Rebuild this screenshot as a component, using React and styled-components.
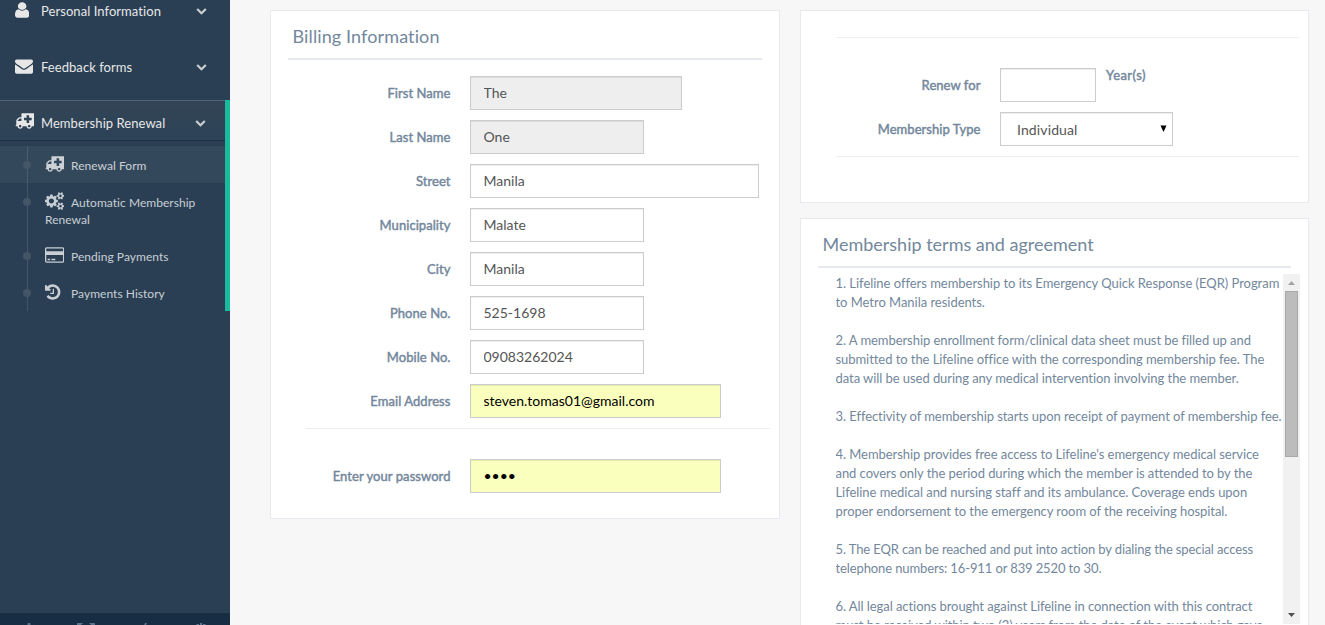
import React from "react";
import styled, { createGlobalStyle, css } from "styled-components";

const GlobalStyle = createGlobalStyle`
  *, *::before, *::after { box-sizing: border-box; }
  body {
    margin: 0;
    background: #f7f7f7;
    color: #73879c;
    font: 400 13px/1.471 Lato, "Liberation Sans", sans-serif;
  }
`;

const Page = styled.div`
  display: flex;
  height: 625px;
  overflow: hidden;
`;

/* ---------- sidebar ---------- */

const Sidebar = styled.aside`
  width: 230px;
  flex: none;
  display: flex;
  flex-direction: column;
  background: #2a3f54;
`;

const Menu = styled.ul`
  list-style: none;
  margin: -12px 0 0;
  padding: 0;
  flex: 1;
`;

const MenuItem = styled.li`
  ${(p) => p.$active && css`border-right: 5px solid #1abb9c;`}
`;

const MenuLink = styled.a`
  display: flex;
  align-items: center;
  height: ${(p) => (p.$active ? 40 : 56)}px;
  padding: 0 ${(p) => (p.$active ? 19 : 23)}px 0 15px;
  ${(p) => !p.$active && css`padding-bottom: 11px;`}
  color: #e7e7e7;
  ${(p) =>
    p.$active &&
    css`
      padding-top: 4px;
      background: linear-gradient(#334556, #2c4257), #2a3f54;
      box-shadow: rgba(0, 0, 0, 0.25) 0 1px 0, inset rgba(255, 255, 255, 0.16) 0 1px 0;
    `}
`;

const IconSlot = styled.span`
  width: 26px;
  display: inline-flex;
  flex: none;
`;

const MenuIcon = styled(IconSlot)`
  padding-bottom: 2px;
`;

const MenuArrow = styled.span`
  opacity: 0.85;
`;

const MenuText = styled.span`
  flex: 1;
  padding-top: 3px;
  letter-spacing: 0.06px;
  white-space: nowrap;
`;

const Glyph = styled.svg`
  display: block;
  flex: none;
  fill: currentColor;
  height: ${(p) => p.$size}px;
`;

const SubMenu = styled.ul`
  position: relative;
  list-style: none;
  margin: 6px 0 0;
  padding: 0;
  &::before {
    content: "";
    position: absolute;
    left: 27px;
    top: 0;
    bottom: 0;
    width: 1px;
    background: #425668;
  }
`;

const SubItem = styled.li`
  position: relative;
  padding: 11px 20px 9px 45px;
  font-size: 12px;
  line-height: 17px;
  letter-spacing: 0.04px;
  color: rgba(255, 255, 255, 0.75);
  background: ${(p) => (p.$current ? "rgba(255, 255, 255, 0.05)" : "none")};
  &::before {
    content: "";
    position: absolute;
    left: 23px;
    top: 15px;
    width: 8px;
    height: 8px;
    border-radius: 50%;
    background: #425668;
  }
`;

const SubIcon = styled(IconSlot)`
  height: 17px;
  vertical-align: top;
  margin-top: -2.5px;
`;

const SidebarFooter = styled.div`
  height: 12px;
  flex: none;
  display: grid;
  grid-template-columns: repeat(4, 1fr);
  justify-items: center;
  overflow: hidden;
  padding-top: 10px;
  background: #172d44;
  color: #5a738e;
`;

/* ---------- content ---------- */

const Content = styled.main`
  flex: 1;
  display: flex;
  align-items: flex-start;
  gap: 20px;
  padding: 10px 16px 0 40px;
`;

const Column = styled.div`
  width: ${(p) => p.$width}px;
  flex: none;
  display: flex;
  flex-direction: column;
  gap: 15px;
`;

const Panel = styled.section`
  height: ${(p) => p.$height}px;
  padding: 10px 17px;
  background: #fff;
  border: 1px solid #e6e9ed;
`;

const PanelTitle = styled.h2`
  height: 39px;
  margin: 0;
  padding: 5px 4.5px 0;
  border-bottom: 2px solid #e6e9ed;
  font-size: 18px;
  font-weight: 400;
  line-height: 20px;
  letter-spacing: ${(p) => p.$tracking || 0}px;
`;

const Form = styled.form`
  padding-top: ${(p) => p.$top}px;
`;

const Row = styled.div`
  display: flex;
  align-items: flex-start;
  margin-bottom: 10px;
`;

const Label = styled.label`
  width: 162.5px;
  flex: none;
  padding-top: 8px;
  text-align: right;
  line-height: 19px;
  letter-spacing: 0.06px;
  -webkit-text-stroke: 0.45px currentColor;
`;

const Unit = styled.span`
  margin-left: 10px;
  line-height: 14px;
  letter-spacing: 0.45px;
  -webkit-text-stroke: 0.45px currentColor;
`;

const fieldBox = css`
  width: ${(p) => p.$width}px;
  height: 34px;
  margin: 0 0 0 19.5px;
  padding: 5px 12px 7px 12.5px;
  border: 1px solid #ccc;
  border-radius: 0;
  outline: none;
  background: #fff;
  box-shadow: inset 0 1px 1px rgba(0, 0, 0, 0.075);
  font: 400 14px/20px Lato, "Liberation Sans", sans-serif;
  color: #555;
`;

const Field = styled.input`
  ${fieldBox}
  ${(p) => p.$locked && css`background: #eee;`}
  ${(p) => p.$filled && css`background: #faffbd; color: #000;`}
`;

const SelectWrap = styled.div`
  position: relative;
`;

const Select = styled.select`
  ${fieldBox}
  appearance: none;
  padding: 7px 12px 5px 16px;
  letter-spacing: 0.12px;
`;

const SelectArrow = styled.svg`
  position: absolute;
  right: 6px;
  top: 13px;
`;

const Divider = styled.hr`
  margin: ${(p) => p.$margin};
  border: 0;
  border-top: 1px solid #eee;
`;

const Terms = styled.div`
  display: flex;
  height: 350px;
  margin: 6px -9px 0 17.5px;
`;

const TermsText = styled.div`
  flex: 1;
  min-width: 0;
  overflow: hidden;
`;

const Clause = styled.p`
  margin: 0 0 19px;
  line-height: 19px;
  letter-spacing: ${(p) => p.$tracking}px;
  white-space: pre;
`;

const ScrollTrack = styled.div`
  width: 17px;
  flex: none;
  display: flex;
  flex-direction: column;
  align-items: center;
  background: #f1f1f1;
`;

const ScrollButton = styled.svg`
  display: block;
  flex: none;
`;

const ScrollThumb = styled.div`
  width: 13px;
  height: 166px;
  margin-bottom: auto;
  background: #bcbcbc;
  border: 1px solid #a8a8a8;
`;

/* ---------- icons ---------- */

const ICONS = {
  user: {
    w: 1280,
    x: 256,
    drawn: 1424,
    d: "M1536 1399q0 109-62.5 187t-150.5 78h-854q-88 0-150.5-78t-62.5-187q0-85 8.5-160.5t31.5-152 58.5-131 94-89 134.5-34.5q131 128 313 128t313-128q76 0 134.5 34.5t94 89 58.5 131 31.5 152 8.5 160.5zm-256-887q0 159-112.5 271.5t-271.5 112.5-271.5-112.5-112.5-271.5 112.5-271.5 271.5-112.5 271.5 112.5 112.5 271.5z",
  },
  envelope: {
    w: 1792,
    d: "M1792 710v794q0 66-47 113t-113 47h-1472q-66 0-113-47t-47-113v-794q44 49 101 87 362 246 497 345 57 42 92.5 65.5t94.5 48 110 24.5h2q51 0 110-24.5t94.5-48 92.5-65.5q170-123 498-345 57-39 100-87zm0-294q0 79-49 151t-122 123q-376 261-468 325-10 7-42.5 31t-54 38.5-52 32.5-57.5 27-50 9h-2q-23 0-50-9t-57.5-27-52-32.5-54-38.5-42.5-31q-91-64-262-182.5t-205-142.5q-62-42-117-115.5t-55-136.5q0-78 41.5-130t118.5-52h1472q65 0 112.5 47t47.5 113z",
  },
  ambulance: {
    w: 1920,
    d: "M640 1408q0-52-38-90t-90-38-90 38-38 90 38 90 90 38 90-38 38-90zM256 896h384v-256h-158q-14 2-22 9l-195 195q-7 12-9 22v30zM1536 1408q0-52-38-90t-90-38-90 38-38 90 38 90 90 38 90-38 38-90zM1664 800v-192q0-14-9-23t-23-9h-224v-224q0-14-9-23t-23-9h-192q-14 0-23 9t-9 23v224h-224q-14 0-23 9t-9 23v192q0 14 9 23t23 9h224v224q0 14 9 23t23 9h192q14 0 23-9t9-23v-224h224q14 0 23-9t9-23zM1920 192v1152q0 26-19 45t-45 19h-192q0 106-75 181t-181 75-181-75-75-181h-384q0 106-75 181t-181 75-181-75-75-181h-128q-26 0-45-19t-19-45 19-45 45-19v-416q0-26 13-58t32-51l198-198q19-19 51-32t58-13h160v-320q0-26 19-45t45-19h1152q26 0 45 19t19 45z",
  },
  cogs: {
    w: 1920,
    d: "M896 896q0-106-75-181t-181-75-181 75-75 181 75 181 181 75 181-75 75-181zm768 512q0-52-38-90t-90-38-90 38-38 90q0 53 37.5 90.5t90.5 37.5 90.5-37.5 37.5-90.5zm0-1024q0-52-38-90t-90-38-90 38-38 90q0 53 37.5 90.5t90.5 37.5 90.5-37.5 37.5-90.5zm-384 421v185q0 10-7 19.5t-16 10.5l-155 24q-11 35-32 76 34 48 90 115 7 11 7 20 0 12-7 19-23 30-82.5 89.5t-78.5 59.5q-11 0-21-7l-115-90q-37 19-77 31-11 108-23 155-7 24-30 24h-186q-11 0-20-7.5t-10-17.5l-23-153q-34-10-75-31l-118 89q-7 7-20 7-11 0-21-8-144-133-144-160 0-9 7-19 10-14 41-53t47-61q-23-44-35-82l-152-24q-10-1-17-9.5t-7-19.5v-185q0-10 7-19.5t16-10.5l155-24q11-35 32-76-34-48-90-115-7-11-7-20 0-12 7-20 22-30 82-89t79-59q11 0 21 7l115 90q34-18 77-32 11-108 23-154 7-24 30-24h186q11 0 20 7.5t10 17.5l23 153q34 10 75 31l118-89q8-7 20-7 11 0 21 8 144 133 144 160 0 8-7 19-12 16-42 54t-45 60q23 48 34 82l152 23q10 2 17 10.5t7 19.5zm640 533v140q0 16-149 31-12 27-30 52 51 113 51 138 0 4-4 7-122 71-124 71-8 0-46-47t-52-68q-20 2-30 2t-30-2q-14 21-52 68t-46 47q-2 0-124-71-4-3-4-7 0-25 51-138-18-25-30-52-149-15-149-31v-140q0-16 149-31 13-29 30-52-51-113-51-138 0-4 4-7 4-2 35-20t59-34 30-16q8 0 46 46.5t52 67.5q20-2 30-2t30 2q51-71 92-112l6-2q4 0 124 70 4 3 4 7 0 25-51 138 17 23 30 52 149 15 149 31zm0-1024v140q0 16-149 31-12 27-30 52 51 113 51 138 0 4-4 7-122 71-124 71-8 0-46-47t-52-68q-20 2-30 2t-30-2q-14 21-52 68t-46 47q-2 0-124-71-4-3-4-7 0-25 51-138-18-25-30-52-149-15-149-31v-140q0-16 149-31 13-29 30-52-51-113-51-138 0-4 4-7 4-2 35-20t59-34 30-16q8 0 46 46.5t52 67.5q20-2 30-2t30 2q51-71 92-112l6-2q4 0 124 70 4 3 4 7 0 25-51 138 17 23 30 52 149 15 149 31z",
  },
  card: {
    w: 1920,
    d: "M1760 128q66 0 113 47t47 113v1216q0 66-47 113t-113 47h-1600q-66 0-113-47t-47-113v-1216q0-66 47-113t113-47h1600zM160 256q-13 0-22.5 9.500t-9.500 22.500v224h1664v-224q0-13-9.500-22.500t-22.500-9.500h-1600zM1760 1536q13 0 22.500-9.500t9.500-22.500v-608h-1664v608q0 13 9.500 22.500t22.500 9.500h1600zM256 1408v-128h256v128h-256zM640 1408v-128h384v128h-384z",
  },
  history: {
    w: 1664,
    x: 128,
    d: "M1664 896q0 156-61 298t-164 245-245 164-298 61q-172 0-327-72.500t-264-204.500q-7-10-6.500-22.500t8.500-20.500l137-138q10-9 25-9 16 2 23 12 73 95 179 147t225 52q104 0 198.500-40.500t163.500-109.500 109.500-163.500 40.500-198.500-40.500-198.500-109.500-163.500-163.500-109.500-198.500-40.500q-98 0-188 35.500t-160 101.500l137 138q31 30 14 69-17 40-59 40h-448q-26 0-45-19t-19-45v-448q0-42 40-59 39-17 69 14l130 129q107-101 244.500-156.500t284.500-55.500q156 0 298 61t245 164 164 245 61 298zm-640-288v448q0 14-9 23t-23 9h-320q-14 0-23-9t-9-23v-64q0-14 9-23t23-9h224v-352q0-14 9-23t23-9h64q14 0 23 9t9 23z",
  },
  chevron: {
    w: 1792,
    d: "M1683 808l-742 741q-19 19-45 19t-45-19l-742-741q-19-19-19-45.500t19-45.500l166-165q19-19 45-19t45 19l531 531 531-531q19-19 45-19t45 19l166 165q19 19 19 45.500t-19 45.500z",
  },
};

function Icon({ name, size = 18 }) {
  const { w, d, x = 0, drawn = w } = ICONS[name];
  return (
    <Glyph
      $size={size}
      width={(size * drawn) / 1792}
      viewBox={`${x} 0 ${w} 1792`}
      preserveAspectRatio="none"
      aria-hidden="true"
    >
      <path fillRule="evenodd" d={d} />
    </Glyph>
  );
}

/* ---------- data ---------- */

const MENU = [
  { icon: "user", text: "Personal Information" },
  { icon: "envelope", text: "Feedback forms" },
  {
    icon: "ambulance",
    text: "Membership Renewal",
    items: [
      { icon: "ambulance", text: "Renewal Form", current: true },
      { icon: "cogs", text: "Automatic Membership Renewal" },
      { icon: "card", text: "Pending Payments" },
      { icon: "history", text: "Payments History" },
    ],
  },
];

const BILLING = [
  { label: "First Name", value: "The", width: 212, locked: true },
  { label: "Last Name", value: "One", width: 174, locked: true },
  { label: "Street", value: "Manila", width: 289 },
  { label: "Municipality", value: "Malate", width: 174 },
  { label: "City", value: "Manila", width: 174 },
  { label: "Phone No.", value: "525-1698", width: 174 },
  { label: "Mobile No.", value: "09083262024", width: 174 },
  { label: "Email Address", value: "steven.tomas01@gmail.com", width: 251, filled: true },
];

const CLAUSES = [
  {
    tracking: -0.03,
    text: "1. Lifeline offers membership to its Emergency Quick Response (EQR) Program\nto Metro Manila residents.",
  },
  {
    tracking: -0.06,
    text: "2. A membership enrollment form/clinical data sheet must be filled up and\nsubmitted to the Lifeline office with the corresponding membership fee. The\ndata will be used during any medical intervention involving the member.",
  },
  {
    tracking: -0.07,
    text: "3. Effectivity of membership starts upon receipt of payment of membership fee.",
  },
  {
    tracking: -0.055,
    text: "4. Membership provides free access to Lifeline's emergency medical service\nand covers only the period during which the member is attended to by the\nLifeline medical and nursing staff and its ambulance. Coverage ends upon\nproper endorsement to the emergency room of the receiving hospital.",
  },
  {
    tracking: -0.115,
    text: "5. The EQR can be reached and put into action by dialing the special access\ntelephone numbers: 16-911 or 839 2520 to 30.",
  },
  {
    tracking: -0.065,
    text: "6. All legal actions brought against Lifeline in connection with this contract\nmust be received within two (2) years from the date of the event which gave",
  },
];

export default function App() {
  return (
    <Page>
      <GlobalStyle />
      <Sidebar>
        <Menu>
          {MENU.map(({ icon, text, items }) => (
            <MenuItem key={text} $active={!!items}>
              <MenuLink $active={!!items}>
                <MenuIcon><Icon name={icon} /></MenuIcon>
                <MenuText>{text}</MenuText>
                <MenuArrow><Icon name="chevron" size={11} /></MenuArrow>
              </MenuLink>
              {items && (
                <SubMenu>
                  {items.map((item) => (
                    <SubItem key={item.text} $current={item.current}>
                      <SubIcon><Icon name={item.icon} /></SubIcon>
                      {item.text}
                    </SubItem>
                  ))}
                </SubMenu>
              )}
            </MenuItem>
          ))}
        </Menu>
        <SidebarFooter>
          <svg width="14" height="14" viewBox="0 0 14 14" fill="currentColor"><path d="M5.800 0h2.400l.4 2 2 .8 1.700-1.100 1.600 1.600-1.100 1.700.8 2H14v2.400H0V7h.4l.8-2L.1 3.300l1.600-1.600L3.400 2.800l2-.8z" /></svg>
          <svg width="18" height="14" viewBox="0 0 18 14" fill="currentColor"><path d="M0 0h6L4 2l3 3-2 2-3-3-2 2zM18 0h-6l2 2-3 3 2 2 3-3 2 2z" /></svg>
          <svg width="14" height="14" viewBox="0 0 14 14" fill="currentColor"><path d="M8 0h2L4 14H2z" /></svg>
          <svg width="14" height="14" viewBox="0 0 14 14" fill="currentColor"><path d="M6 0h2v7H6zM3 1h2v2C2 5 2 10 7 11s7-6 2-8V1h2c5 4 3 13-4 13S-2 5 3 1z" /></svg>
        </SidebarFooter>
      </Sidebar>

      <Content>
        <Column $width={510}>
          <Panel $height={509}>
            <PanelTitle $tracking={0.12}>Billing Information</PanelTitle>
            <Form $top={16}>
              {BILLING.map((f) => (
                <Row key={f.label}>
                  <Label>{f.label}</Label>
                  <Field readOnly value={f.value} $width={f.width} $locked={f.locked} $filled={f.filled} />
                </Row>
              ))}
              <Divider $margin="0 -8px 30px 18px" />
              <Row>
                <Label>Enter your password</Label>
                <Field type="password" readOnly value="1234" $width={251} $filled />
              </Row>
            </Form>
          </Panel>
        </Column>

        <Column $width={509}>
          <Panel $height={193}>
            <Form $top={16}>
              <Divider $margin="0 -8px 30px 18px" />
              <Row>
                <Label>Renew for</Label>
                <Field readOnly value="" $width={96} />
                <Unit>Year(s)</Unit>
              </Row>
              <Row>
                <Label>Membership Type</Label>
                <SelectWrap>
                  <Select $width={173} defaultValue="Individual">
                    <option>Individual</option>
                  </Select>
                  <SelectArrow width="7" height="8" viewBox="0 0 7 8"><path d="M0.500 0.500h6L3.500 7z" fill="#000" /></SelectArrow>
                </SelectWrap>
              </Row>
              <Divider $margin="0 -8px 0 18px" />
            </Form>
          </Panel>

          <Panel $height={440}>
            <PanelTitle>Membership terms and agreement</PanelTitle>
            <Terms>
              <TermsText>
                {CLAUSES.map((c) => (
                  <Clause key={c.text} $tracking={c.tracking}>{c.text}</Clause>
                ))}
              </TermsText>
              <ScrollTrack>
                <ScrollButton width="17" height="17"><path d="M5 11h7L8.500 7z" fill="#a3a3a3" /></ScrollButton>
                <ScrollThumb />
                <ScrollButton width="17" height="17"><path d="M5 6h7L8.500 10z" fill="#505050" /></ScrollButton>
              </ScrollTrack>
            </Terms>
          </Panel>
        </Column>
      </Content>
    </Page>
  );
}
